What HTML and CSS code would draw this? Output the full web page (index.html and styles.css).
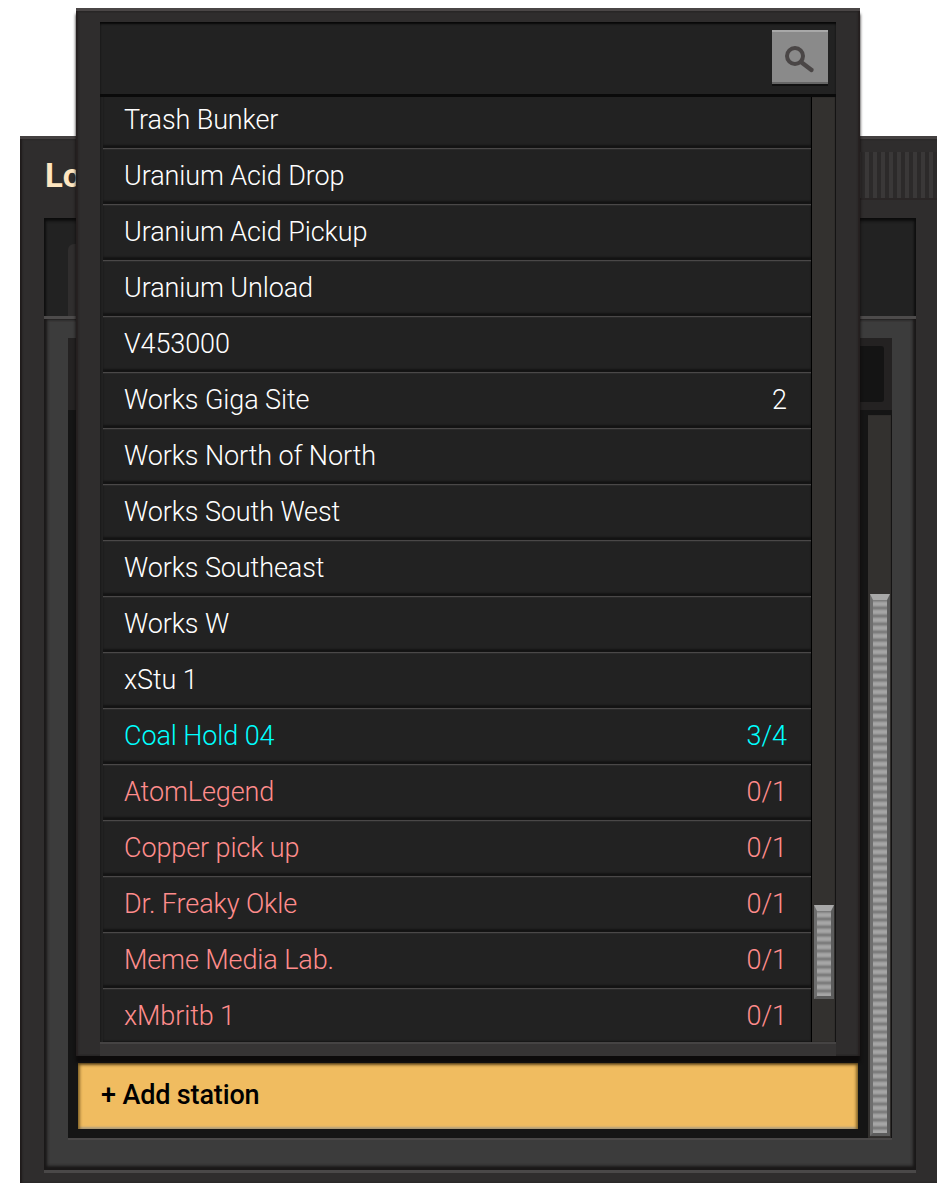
FILE: index.html
```html
<!DOCTYPE html>
<html lang="en">
<head>
    <meta charset="UTF-8">
    <title>Stations</title>
    <link rel="stylesheet" href="styles.css">
</head>
<body>
    <div class="window">
        <div class="titlebar">
            <h1>Lo</h1>
            <div class="grille"></div>
        </div>
        <div class="frame">
            <div class="tabs"><div class="tab"></div></div>
            <div class="body-panel">
                <div class="inset">
                    <div class="filter-row"><div class="filter-box"></div></div>
                    <div class="content-row">
                        <div class="content">
                            <button class="add-btn">+ Add station</button>
                        </div>
                        <div class="track back-track"><div class="thumb back-thumb"></div></div>
                    </div>
                </div>
            </div>
        </div>
    </div>

    <!-- dropdown over the window -->
    <div class="dropdown">
        <div class="dropdown-inner">
            <div class="searchbar">
                <button class="search-btn">
                    <svg width="36" height="36" viewBox="0 0 36 36" fill="none" stroke="#4a4646" stroke-linecap="round">
                        <circle cx="13" cy="17" r="8" stroke-width="4"/>
                        <path d="M19 23 L29.5 31" stroke-width="4.4"/>
                    </svg>
                </button>
            </div>
            <div class="list-wrap">
                <ul class="list">
                    <li><span>Trash Bunker</span></li>
                    <li><span>Uranium Acid Drop</span></li>
                    <li><span>Uranium Acid Pickup</span></li>
                    <li><span>Uranium Unload</span></li>
                    <li><span>V453000</span></li>
                    <li><span>Works Giga Site</span><span>2</span></li>
                    <li><span>Works North of North</span></li>
                    <li><span>Works South West</span></li>
                    <li><span>Works Southeast</span></li>
                    <li><span>Works W</span></li>
                    <li><span>xStu 1</span></li>
                    <li class="cyan"><span>Coal Hold 04</span><span>3/4</span></li>
                    <li class="red"><span>AtomLegend</span><span>0/1</span></li>
                    <li class="red"><span>Copper pick up</span><span>0/1</span></li>
                    <li class="red"><span>Dr. Freaky Okle</span><span>0/1</span></li>
                    <li class="red"><span>Meme Media Lab.</span><span>0/1</span></li>
                    <li class="red"><span>xMbritb 1</span><span>0/1</span></li>
                </ul>
                <div class="track front-track"><div class="thumb front-thumb"></div></div>
            </div>
        </div>
    </div>
</body>
</html>
```

FILE: styles.css
```css
body {
    margin: 0;
    height: 1185px;
    overflow: hidden;
    background-color: white;
    font-family: Roboto, "Noto Sans", sans-serif;
}

/* back window */
.window {
    box-sizing: border-box;
    width: 917px;
    height: 1047px;
    margin: 136px 0 0 20px;
    background-color: #2f2d2d;
    border-top: 3px solid #444040;
    box-shadow: inset 2px 0 2px #1f1b1b;
    display: flex;
    flex-direction: column;
    overflow: hidden;
}
.titlebar {
    height: 79px;
    display: flex;
    padding: 13px 0 0 25px;
    box-sizing: border-box;
    justify-content: space-between;
}
.titlebar h1 {
    margin: 0;
    font-size: 33px;
    font-weight: 700;
    color: #ffe6c0;
    line-height: 48px;
}
.grille {
    width: 96px;
    height: 48px;
    background: repeating-linear-gradient(90deg, #3a3838 0 4px, #2c2a2a 4px 8px);
    border-bottom: 2px solid #2a2626;
    box-sizing: border-box;
}
.frame {
    margin-left: 24px;
    width: 872px;
    height: 952px;
    background-color: #222;
    box-shadow: inset 0 3px 3px #0c0c0c, inset 2px 0 2px #111, inset -2px 0 2px #111;
    display: flex;
    flex-direction: column;
    border-bottom: 3px solid #4a4848;
}
.tabs {
    height: 98px;
    padding: 26px 0 0 24px;
    box-sizing: border-box;
}
.tab {
    width: 60px;
    height: 72px;
    border-radius: 6px 0 0 0;
    background-color: #302e2e;
}
.body-panel {
    flex: 1;
    background-color: #3c3c3c;
    border-top: 3px solid #4d4b4b;
    padding: 19px 24px 32px 24px;
    box-shadow: inset 0 -4px 3px #1a1818, inset 3px 0 3px #1a1818, inset -3px 0 3px #1a1818;
    display: flex;
}
.inset {
    flex: 1;
    background-color: #151515;
    box-shadow: 0 2px 0 #4a4848;
    display: flex;
    flex-direction: column;
}
.filter-row {
    height: 72px;
    margin-bottom: 5px;
    background-color: #242222;
    padding: 8px;
    box-sizing: border-box;
    flex: none;
}
.filter-box {
    height: 56px;
    background-color: #141414;
    border-radius: 3px;
}
.content-row {
    flex: 1;
    display: flex;
    justify-content: space-between;
}
.content {
    display: flex;
    align-items: flex-end;
    padding: 0 0 9px 10px;
}
.add-btn {
    width: 780px;
    height: 66px;
    border: none;
    background-color: #f0bc60;
    box-shadow: inset 0 3px 3px -1px #6e5220, inset 4px 0 3px -2px #8a6a2c, inset -4px 0 3px -2px #8a6a2c, inset 0 -3px 2px -1px #b0a080;
    color: black;
    font-family: inherit;
    font-size: 27px;
    font-weight: 500;
    letter-spacing: -0.15px;
    text-align: left;
    padding: 0 0 2px 23px;
}

/* scrollbars */
.track {
    width: 24px;
    background-color: #33312f;
    box-shadow: inset -1px 0 1px #111;
    box-sizing: border-box;
    padding: 0 2px;
    display: flex;
    flex-direction: column;
}
.back-track {
    padding-top: 179px;
    padding-bottom: 2px;
}
.thumb {
    box-sizing: border-box;
    width: 20px;
    border-top: 6px solid #a8a8a8;
    border-bottom: 3px solid #5c5c5c;
    border-left: 3px solid #6e6e6e;
    border-right: 3px solid #5c5c5c;
    background: repeating-linear-gradient(180deg, #757575 0, #a5a5a5 3px, #a5a5a5 5px, #757575 8px);
}
.back-thumb {
    flex: 1;
}
.front-track {
    height: 100%;
    margin-left: 1px;
    padding-top: 808px;
}
.front-thumb {
    height: 94px;
}

/* dropdown */
.dropdown {
    position: absolute;
    left: 76px;
    top: 8px;
    box-sizing: border-box;
    width: 784px;
    height: 1048px;
    padding: 11px 24px 14px;
    background-color: #2f2d2d;
    border-top: 3px solid #4a4646;
    box-shadow: 0 6px 3px #0c0a0a, inset 2px 0 2px #241f1f, inset -2px 0 2px #241f1f;
}
.dropdown-inner {
    height: 100%;
    background-color: #222;
    box-shadow: inset 0 2px 2px #080808, 0 2px 0 #454343, 0 14px 0 #363434;
    display: flex;
    flex-direction: column;
}
.searchbar {
    height: 75px;
    box-sizing: border-box;
    flex: none;
    padding: 8px 8px 0 0;
    display: flex;
    justify-content: flex-end;
    border-bottom: 3px solid #0a0a0a;
}
.search-btn {
    width: 56px;
    height: 54px;
    padding: 0;
    border: none;
    border-top: 2px solid #a8a8a8;
    border-bottom: 2px solid #666;
    background-color: #8a8a8a;
    box-shadow: 0 2px 0 #111;
    display: flex;
    align-items: center;
    justify-content: center;
}
.list-wrap {
    flex: 1;
    display: flex;
    min-height: 0;
    overflow: hidden;
}
.list {
    list-style: none;
    margin: -4px 0 0 3px;
    padding: 0;
    width: 708px;
    flex: none;
    box-shadow: 1px 0 0 #000;
}
.list li {
    box-sizing: border-box;
    height: 56px;
    padding: 0 24px 2px 21px;
    display: flex;
    justify-content: space-between;
    align-items: center;
    background-color: #222;
    border-top: 1px solid #2a2a2a;
    border-bottom: 1px solid #4a4848;
    color: white;
    font-size: 27px;
    font-weight: 300;
    letter-spacing: -0.1px;
    box-shadow: inset 0 -3px 2px #141414;
}
.list li.cyan {
    color: #0ff;
}
.list li.red {
    color: #ff8c8c;
}
```
